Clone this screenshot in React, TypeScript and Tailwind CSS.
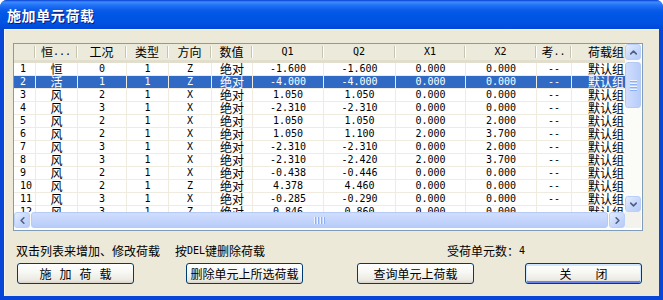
import React from 'react';
import { ChevronUp, ChevronDown, ChevronLeft, ChevronRight } from 'lucide-react';

// mixed text: ascii runs in a narrow mono face, CJK in Noto
const T = ({ s }: { s: string }) => (
  <>
    {s.split(/([\x20-\x7e]+)/).filter(Boolean).map((p, i) =>
      /^[\x20-\x7e]+$/.test(p)
        ? <span key={i} className="inline-block leading-[12px] font-['DejaVu_Sans_Mono',monospace] text-[10px] whitespace-pre">{p}</span>
        : <span key={i} className="inline-block leading-[12px] text-[12px]">{p}</span>
    )}
  </>
);

const COLS = [
  'w-[22px] justify-start pl-[6px]',
  'w-[42px] justify-center',
  'w-[49px] justify-center',
  'w-[42px] justify-center',
  'w-[43px] justify-center',
  'w-[41px] justify-center',
  'w-[71px] justify-center',
  'w-[72px] justify-center',
  'w-[70px] justify-center',
  'w-[71px] justify-center',
  'w-[35px] justify-center',
  'w-[68px] justify-center',
];

const HEAD = ['', '恒...', '工况', '类型', '方向', '数值', 'Q1', 'Q2', 'X1', 'X2', '考..', '荷载组'];

const ROWS: string[][] = [
  ['1', '恒', '0', '1', 'Z', '绝对', '-1.600', '-1.600', '0.000', '0.000', '--', '默认组'],
  ['2', '活', '1', '1', 'Z', '绝对', '-4.000', '-4.000', '0.000', '0.000', '--', '默认组'],
  ['3', '风', '2', '1', 'X', '绝对', '1.050', '1.050', '0.000', '0.000', '--', '默认组'],
  ['4', '风', '3', '1', 'X', '绝对', '-2.310', '-2.310', '0.000', '0.000', '--', '默认组'],
  ['5', '风', '2', '1', 'X', '绝对', '1.050', '1.050', '0.000', '2.000', '--', '默认组'],
  ['6', '风', '2', '1', 'X', '绝对', '1.050', '1.100', '2.000', '3.700', '--', '默认组'],
  ['7', '风', '3', '1', 'X', '绝对', '-2.310', '-2.310', '0.000', '2.000', '--', '默认组'],
  ['8', '风', '3', '1', 'X', '绝对', '-2.310', '-2.420', '2.000', '3.700', '--', '默认组'],
  ['9', '风', '2', '1', 'X', '绝对', '-0.438', '-0.446', '0.000', '0.000', '--', '默认组'],
  ['10', '风', '2', '1', 'Z', '绝对', '4.378', '4.460', '0.000', '0.000', '--', '默认组'],
  ['11', '风', '3', '1', 'X', '绝对', '-0.285', '-0.290', '0.000', '0.000', '--', '默认组'],
  ['12', '风', '3', '1', 'Z', '绝对', '0.846', '0.860', '0.000', '0.000', '--', '默认组'],
];

const SBtn = ({ children }: { children: React.ReactNode }) => (
  <div className="w-[16px] h-[16px] shrink-0 rounded-[3px] border border-[#BAD0FC] bg-[linear-gradient(135deg,#E6EEFF_0%,#CAD9FC_50%,#B6CBF8_100%)] flex items-center justify-center text-[#4D6185]">
    {children}
  </div>
);

const Btn = ({ children, def }: { children: React.ReactNode; def?: boolean }) => (
  <div className={`w-[117px] h-[21px] shrink-0 rounded-[3px] border border-[#003C74] bg-[linear-gradient(180deg,#ffffff_0%,#f7f7f3_45%,#ebe9e1_85%,#d8d4c8_100%)] flex items-center justify-center text-black leading-[12px] ${def ? 'shadow-[inset_0_1px_0_1px_#CEE7FF,inset_0_-1px_0_1px_#6982EE]' : ''}`}>
    {children}
  </div>
);

export default function App() {
  return (
    <div className="w-[663px] h-[300px] bg-white font-['Noto_Sans_CJK_SC',sans-serif] text-black select-none">
      <div className="flex flex-col h-full rounded-t-[7px] overflow-hidden bg-[#0846D8]">
        <div className="h-[29px] shrink-0 flex items-center pl-[7px] bg-[linear-gradient(180deg,#0a3ed0_0px,#3d8cff_2px,#2373f8_5px,#0a5ce9_10px,#0056e7_50%,#0052e2_80%,#0048d8_100%)]">
          <span className="text-white text-[14px] font-bold tracking-[0.6px] leading-[14px] [text-shadow:1px_1px_#0a1883]">施加单元荷载</span>
        </div>
        <div className="flex-1 flex px-[4px] pb-[4px]">
          <div className="flex-1 flex flex-col bg-[#ECE9D8] border-t border-l border-t-[#F6F5EF] border-l-[#F6F5EF]">
            {/* list view */}
            <div className="ml-[8px] mt-[13px] w-[630px] h-[188px] shrink-0 border border-[#7F9DB9] flex flex-col bg-white">
              <div className="flex h-[168px]">
                <div className="w-[611px] overflow-hidden flex flex-col">
                  <div className="flex h-[19px] shrink-0 w-[626px] bg-[#EBEADB] border-b-[3px] border-b-[#E2DECD]">
                    {HEAD.map((h, i) => (
                      <div key={i} className={`flex items-center shrink-0 h-full ${COLS[i].replace('pl-[6px]', '')}`}>
                        <div className="flex-1 flex justify-center items-center"><T s={h} /></div>
                        {i < HEAD.length - 1 && <div className="self-center h-[12px] w-[2px] shrink-0 border-l border-l-[#C7C5B2] border-r border-r-white" />}
                      </div>
                    ))}
                  </div>
                  {ROWS.map((r, ri) => (
                    <div key={ri} className={`flex h-[13px] shrink-0 w-[626px] border-b border-b-[#EFEBDE] ${ri === 1 ? 'bg-[#316AC5] text-white' : ''}`}>
                      {r.map((c, ci) => (
                        <div key={ci} className={`flex items-center shrink-0 h-full ${ci < r.length - 1 ? 'border-r border-r-[#EFEBDE]' : ''} ${COLS[ci]}`}>
                          <T s={c} />
                        </div>
                      ))}
                    </div>
                  ))}
                </div>
                {/* vertical scrollbar */}
                <div className="w-[16px] shrink-0 flex flex-col bg-[#FBFBF8]">
                  <SBtn><ChevronUp size={11} strokeWidth={3.5} /></SBtn>
                  <div className="mt-[2px] h-[46px] rounded-[3px] border border-[#B6CAF7] bg-[linear-gradient(90deg,#D0DDFD_0%,#C4D5FC_50%,#B7CCF9_100%)] flex flex-col items-center justify-center gap-[1px]">
                    <div className="w-[7px] h-[2px] border-t border-t-[#EEF4FE] border-b border-b-[#8CB0F8]" />
                    <div className="w-[7px] h-[2px] border-t border-t-[#EEF4FE] border-b border-b-[#8CB0F8]" />
                    <div className="w-[7px] h-[2px] border-t border-t-[#EEF4FE] border-b border-b-[#8CB0F8]" />
                    <div className="w-[7px] h-[2px] border-t border-t-[#EEF4FE] border-b border-b-[#8CB0F8]" />
                  </div>
                  <div className="flex-1" />
                  <SBtn><ChevronDown size={11} strokeWidth={3.5} /></SBtn>
                </div>
              </div>
              {/* horizontal scrollbar */}
              <div className="flex h-[16px] shrink-0">
                <div className="w-[611px] flex bg-[#FBFBF8]">
                  <SBtn><ChevronLeft size={11} strokeWidth={3.5} /></SBtn>
                  <div className="flex-1 mx-[1px] rounded-[3px] border border-[#B6CAF7] bg-[linear-gradient(180deg,#D0DDFD_0%,#C4D5FC_50%,#B7CCF9_100%)] flex items-center justify-center gap-[1px]">
                    <div className="h-[7px] w-[2px] border-l border-l-[#EEF4FE] border-r border-r-[#8CB0F8]" />
                    <div className="h-[7px] w-[2px] border-l border-l-[#EEF4FE] border-r border-r-[#8CB0F8]" />
                    <div className="h-[7px] w-[2px] border-l border-l-[#EEF4FE] border-r border-r-[#8CB0F8]" />
                    <div className="h-[7px] w-[2px] border-l border-l-[#EEF4FE] border-r border-r-[#8CB0F8]" />
                  </div>
                  <SBtn><ChevronRight size={11} strokeWidth={3.5} /></SBtn>
                </div>
                <div className="w-[16px] bg-[#F3F2EC]" />
              </div>
            </div>

            {/* hints */}
            <div className="flex h-[13px] mt-[13px] pl-[11px] items-center shrink-0">
              <div className="w-[431px] shrink-0 flex items-center">
                <T s="双击列表来增加、修改荷载" />
                <span className="ml-[15px] flex items-center"><T s="按DEL键删除荷载" /></span>
              </div>
              <div className="flex items-center"><T s="受荷单元数：4" /></div>
            </div>

            {/* buttons */}
            <div className="flex mt-[6px] pl-[12px] shrink-0">
              <Btn><div className="flex gap-[8px] text-[12px]"><span>施</span><span>加</span><span>荷</span><span>载</span></div></Btn>
              <div className="ml-[52px]"><Btn><span className="text-[12px]">删除单元上所选荷载</span></Btn></div>
              <div className="ml-[54px]"><Btn><span className="text-[12px]">查询单元上荷载</span></Btn></div>
              <div className="ml-[51px]"><Btn def><span className="text-[12px]">关　　闭</span></Btn></div>
            </div>
          </div>
        </div>
      </div>
    </div>
  );
}
